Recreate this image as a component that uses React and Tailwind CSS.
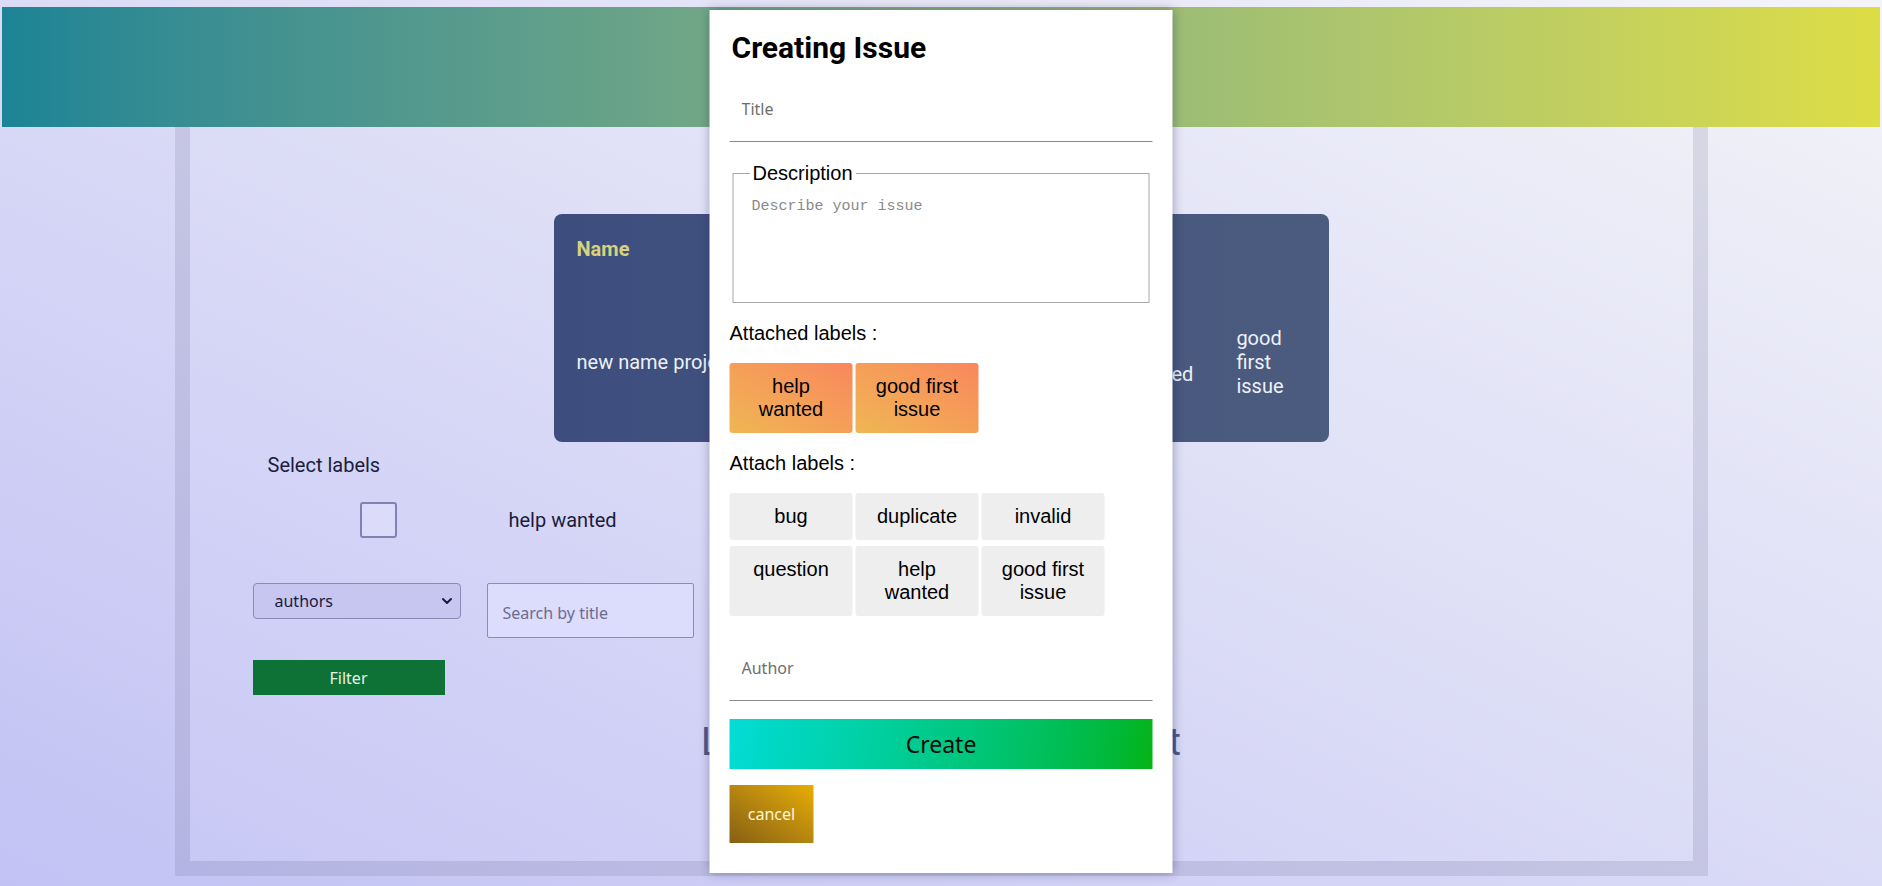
import { ChevronDown } from "lucide-react";

const attached = ["help wanted", "good first issue"];
const available = ["bug", "duplicate", "invalid", "question", "help wanted", "good first issue"];

function IssueCard() {
  return (
    <div className="mx-auto flex h-[228px] w-[775px] justify-between rounded-[8px] bg-linear-to-r from-[#3d4d7e] to-[#4c5c7f] text-[20px] leading-[24px] text-[#eef0f8]">
      <div className="flex w-[260px] flex-col pl-[23px]">
        <div className="h-[68px] pt-[23px] font-bold text-[#d6d27e]">Name</div>
        <div className="flex h-[160px] items-center whitespace-nowrap">new name project</div>
      </div>
      <div className="flex flex-col">
        <div className="h-[68px] pt-[23px]">Description</div>
        <div className="flex h-[160px] items-center">first issue</div>
      </div>
      <div className="flex items-center gap-[43px] pt-[68px] pr-[45px]">
        {attached.map((l) => (
          <div key={l} className="w-min">
            {l}
          </div>
        ))}
      </div>
    </div>
  );
}

function Filters() {
  return (
    <div className="text-[20px] text-[#1c1c3c]">
      <p className="mt-[11px] ml-[78px] leading-[24px]">Select labels</p>
      <div className="mt-[25px] ml-[170px] flex items-center">
        <input
          type="checkbox"
          className="h-[36px] w-[37px] appearance-none rounded-[3px] border-2 border-[#8282b2] bg-[#dcdcfa]"
        />
        <span className="ml-[112px] leading-[24px]">help wanted</span>
      </div>
      <div className="mt-[45px] ml-[63px] flex items-start gap-[26px] font-['Noto_Sans',sans-serif] text-[16px]">
        <div className="relative">
          <select className="h-[36px] w-[208px] appearance-none rounded-[4px] border border-[#8a8ab8] bg-[#c6c6f0] px-[21px] text-[#1a1a40] outline-none">
            <option>authors</option>
          </select>
          <ChevronDown
            size={16}
            strokeWidth={3}
            className="pointer-events-none absolute top-[10px] right-[6px] text-[#1a1a40]"
          />
        </div>
        <input
          placeholder="Search by title"
          className="h-[55px] w-[207px] rounded-[2px] border border-[#8c8cbc] bg-[#dcdcfc] px-[15px] pt-[4px] text-[#1a1a40] outline-none placeholder:text-[#6c6c90]"
        />
      </div>
      <button className="mt-[22px] ml-[63px] h-[35px] w-[192px] bg-[#0e7236] font-['Noto_Sans',sans-serif] text-[16px] text-[#e6f2e6]">
        Filter
      </button>
      <h2 className="mt-[24px] text-center text-[38px] leading-[46px] text-[#4a5a8a]">
        List of issues for this project
      </h2>
    </div>
  );
}

function LabelButton({ label, className }) {
  return (
    <button
      className={`flex w-[123px] items-start justify-center rounded-[3px] px-[12px] py-[12px] text-center ${className}`}
    >
      <span>{label}</span>
    </button>
  );
}

function CreateIssueModal() {
  return (
    <div className="absolute top-[10px] left-1/2 flex h-[863px] w-[463px] -translate-x-1/2 flex-col bg-white px-[20px] pt-[20px] shadow-[0_0_10px_rgba(20,20,60,0.35)] font-['Liberation_Sans',Arial,sans-serif] text-[20px] leading-[23px] text-black">
      <h1 className="pl-[2px] font-['Roboto',sans-serif] text-[30px] leading-[36px] font-bold">Creating Issue</h1>
      <input
        placeholder="Title"
        className="mt-[16px] h-[60px] w-full border-b border-[#8a8a8a] px-[12px] pb-[5px] font-['Noto_Sans',sans-serif] text-[16px] outline-none placeholder:text-[#6e6e6e]"
      />
      <fieldset className="mx-[3px] mt-[20px] border border-[#a8a8a8] px-[18px] pb-[2px]">
        <legend className="ml-[-2px] px-[3px]">Description</legend>
        <textarea
          placeholder="Describe your issue"
          className="block h-[115px] w-full resize-none pt-[13px] font-['Liberation_Mono',monospace] text-[15px] leading-[18px] outline-none placeholder:text-[#8a8a8a]"
        />
      </fieldset>
      <p className="mt-[19px]">Attached labels :</p>
      <div className="mt-[18px] flex flex-wrap gap-[3px]">
        {attached.map((l) => (
          <LabelButton key={l} label={l} className="bg-linear-to-tr from-[#efb653] to-[#f9875c]" />
        ))}
      </div>
      <p className="mt-[19px]">Attach labels :</p>
      <div className="mt-[18px] flex w-[380px] flex-wrap gap-x-[3px] gap-y-[6px]">
        {available.map((l) => (
          <LabelButton key={l} label={l} className="bg-[#eeeeee]" />
        ))}
      </div>
      <input
        placeholder="Author"
        className="mt-[25px] h-[60px] w-full border-b border-[#8a8a8a] px-[12px] pb-[6px] font-['Noto_Sans',sans-serif] text-[16px] outline-none placeholder:text-[#6e6e6e]"
      />
      <button className="mt-[18px] h-[50px] w-full bg-linear-100 from-[#06dcd6] to-[#06b40e] font-['Noto_Sans',sans-serif] text-[23px] text-[#0a0a0a]">
        Create
      </button>
      <button className="mt-[16px] h-[58px] w-[84px] bg-linear-to-tr from-[#866012] to-[#e8ae02] font-['Noto_Sans',sans-serif] text-[16px] text-[#fff6d8]">
        cancel
      </button>
    </div>
  );
}

export default function App() {
  return (
    <div className="relative h-[886px] overflow-hidden bg-linear-to-tr from-[#c2c2f4] to-[#f4f4f8] px-[2px] pt-[7px] font-['Roboto',sans-serif]">
      <header className="h-[120px] bg-linear-to-r from-[#1b8495] to-[#dddd44]" />
      <main className="mx-auto h-[749px] w-[1533px] border-x-[15px] border-b-[15px] border-[rgba(40,40,90,0.12)] bg-white/5 pt-[87px]">
        <IssueCard />
        <Filters />
      </main>
      <CreateIssueModal />
    </div>
  );
}
